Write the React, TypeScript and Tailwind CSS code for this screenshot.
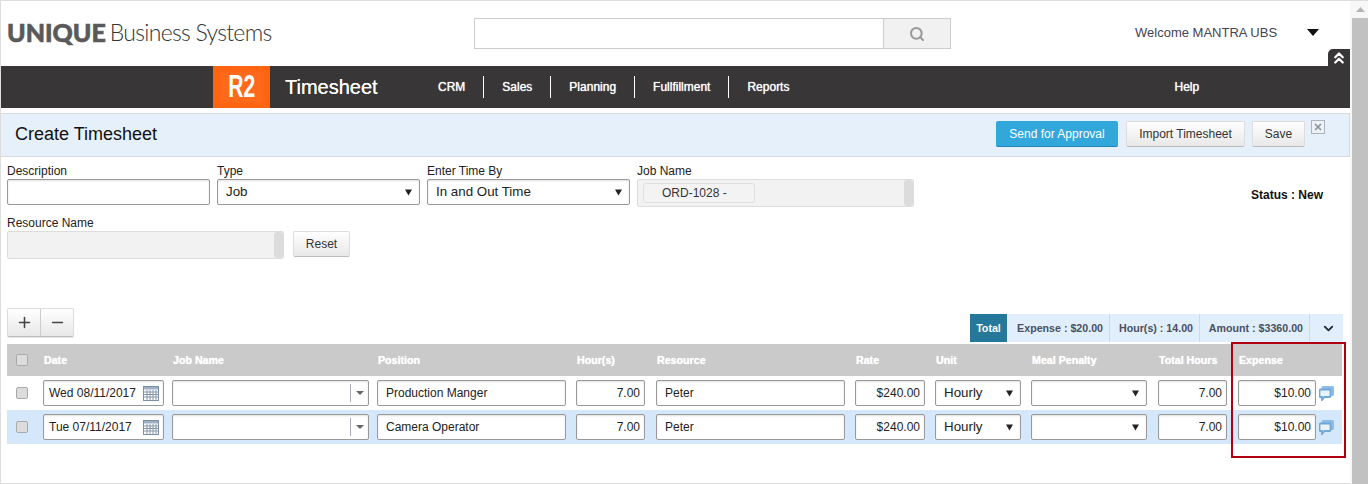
import React from "react";
import { Search, Plus, Minus, ChevronsUp, ChevronDown, X } from "lucide-react";

const font = "font-['Liberation_Sans',Arial,sans-serif]";

const Caret = () => (
  <svg width="7" height="7" viewBox="0 0 7 7" className="shrink-0">
    <path d="M0 0.5h7L3.500 6.500z" fill="#222" />
  </svg>
);

const CalendarIcon = () => (
  <svg width="16" height="15" viewBox="0 0 16 15" className="shrink-0">
    <rect x="0.5" y="0.5" width="15" height="14" fill="#fff" stroke="#7c8ea3" />
    <rect x="1" y="1" width="14" height="2.5" fill="#9fb0c2" />
    <path
      d="M4 4v10M7 4v10M10 4v10M13 4v10M1 6h14M1 8.5h14M1 11h14"
      stroke="#8596aa"
      strokeWidth="1"
    />
  </svg>
);

const CommentIcon = () => (
  <svg width="15" height="16" viewBox="0 0 15 16" className="shrink-0">
    <path
      d="M4 1h9.500A1.500 1.500 0 0 1 15 2.500v7a1.500 1.500 0 0 1-1.500 1.500H12V4H2.500V2.500A1.500 1.500 0 0 1 4 1z"
      fill="#8dbde6"
    />
    <path
      d="M1.500 4.500h9a1 1 0 0 1 1 1v5.500a1 1 0 0 1-1 1H5.500L3 15v-3H1.500a1 1 0 0 1-1-1V5.500a1 1 0 0 1 1-1z"
      fill="#e9f3fb"
      stroke="#6fa8dc"
      strokeWidth="1.800"
    />
  </svg>
);

const Checkbox = () => (
  <div className="w-3 h-3 rounded-[2px] border border-[#aaa] bg-[#dcdcdc] ml-[9px]" />
);

const Box = ({ className = "", children }: { className?: string; children?: React.ReactNode }) => (
  <div
    className={`h-[26px] bg-white border border-[#999] rounded-[2px] shadow-[inset_0_1px_2px_rgba(0,0,0,0.12)] flex items-center text-[12px] text-[#222] ${className}`}
  >
    {children}
  </div>
);

const SelectBox = ({ value, className = "" }: { value?: string; className?: string }) => (
  <Box className={`pl-[8px] pr-[7px] justify-between ${className}`}>
    <span className="text-[13.33px]">{value}</span>
    <Caret />
  </Box>
);

const GreyButton = ({ className = "", children }: { className?: string; children: React.ReactNode }) => (
  <div
    className={`h-[26px] flex items-center justify-center border border-[#ddd] border-b-[#bbb] rounded-[2px] bg-gradient-to-b from-white to-[#e8e8e8] text-[12px] text-[#333] ${className}`}
  >
    {children}
  </div>
);

const cols =
  "grid grid-cols-[36px_129px_205px_199px_80px_199px_80px_96px_127px_80px_104px] items-center";

const headers = ["Date", "Job Name", "Position", "Hour(s)", "Resource", "Rate", "Unit", "Meal Penalty", "Total Hours", "Expense"];

const rows = [
  { date: "Wed 08/11/2017", position: "Production Manger", bg: "bg-white" },
  { date: "Tue 07/11/2017", position: "Camera Operator", bg: "bg-[#d5e8fb]" },
];

const Row = ({ date, position, bg }: { date: string; position: string; bg: string }) => (
  <div className={`${cols} h-[34px] ${bg}`}>
    <Checkbox />
    <Box className="w-[121px] pl-[5px] pr-[4px] justify-between">
      <span>{date}</span>
      <CalendarIcon />
    </Box>
    <Box className="w-[197px] justify-end">
      <div className="w-[18px] h-[18px] border-l border-[#aab] flex items-center justify-center">
        <svg width="8" height="4" viewBox="0 0 8 4">
          <path d="M0 0h8L4 4z" fill="#666" />
        </svg>
      </div>
    </Box>
    <Box className="w-[189px] pl-[8px]">{position}</Box>
    <Box className="w-[69px] justify-end pr-[4px]">7.00</Box>
    <Box className="w-[189px] pl-[8px]">Peter</Box>
    <Box className="w-[70px] justify-end pr-[4px]">$240.00</Box>
    <SelectBox value="Hourly" className="w-[86px]" />
    <SelectBox className="w-[116px]" />
    <Box className="w-[69px] justify-end pr-[4px]">7.00</Box>
    <div className="flex items-center gap-[3px]">
      <Box className="w-[78px] justify-end pr-[4px]">$10.00</Box>
      <CommentIcon />
    </div>
  </div>
);

const Summary = ({ children, className = "" }: { children: React.ReactNode; className?: string }) => (
  <div className={`h-full flex items-center justify-end pr-[6px] border-r border-[#c4dcef] ${className}`}>{children}</div>
);

const navItems = ["CRM", "Sales", "Planning", "Fullfillment", "Reports"];

export default function App() {
  return (
    <div className={`${font} flex h-[484px] w-[1368px] overflow-hidden bg-white text-[12px] text-[#222]`}>
      <div className="flex flex-col w-[1350px] h-full border-l border-t border-b border-[#ddd]">
        {/* top bar */}
        <header className="relative h-[65px] shrink-0 flex items-start">
          <div className="w-[473px] pl-[6px] pt-[18px] flex items-center whitespace-nowrap">
            <span className="font-['Lato',sans-serif] font-black text-[25px] leading-[26px] text-[#5a5a5a] [-webkit-text-stroke:0.6px_#5a5a5a]">UNIQUE</span>
            <span className="font-['Lato',sans-serif] font-light text-[23px] leading-[26px] ml-[4px] text-[#333] tracking-[-0.72px]">
              Business Systems
            </span>
          </div>
          <div className="mt-[17px] flex h-[31px] border border-[#ccc]">
            <div className="w-[408px]" />
            <div className="w-[67px] bg-[#f1f1f1] border-l border-[#ccc] flex items-center justify-center">
              <Search size={16} strokeWidth={3} className="text-[#999]" />
            </div>
          </div>
          <div className="ml-[184px] mt-[24px] text-[#445] text-[13px] leading-4 whitespace-nowrap">Welcome MANTRA UBS</div>
          <svg width="12" height="7" viewBox="0 0 12 7" className="ml-[30px] mt-[28px]">
            <path d="M0 0h12L6 7z" fill="#111" />
          </svg>
          <div className="absolute right-0 bottom-0 w-[22px] h-[17px] bg-[#383637] rounded-tl-[5px] flex items-center justify-center">
            <ChevronsUp size={18} strokeWidth={3} className="text-white" />
          </div>
        </header>

        {/* nav */}
        <nav className="h-[42px] shrink-0 bg-[#383637] flex items-center text-white">
          <div className="ml-[212px] w-[57px] h-full bg-[#ff6510] flex items-center justify-center">
            <div className="w-[43px] h-[31px] bg-[#ff6a1a] flex items-center justify-center">
              <span className="font-bold text-[31px] scale-x-[0.68]">R2</span>
            </div>
          </div>
          <div className="ml-[15px] w-[153px] text-[20px] [text-shadow:0_0_0.5px_#fff]">Timesheet</div>
          {navItems.map((item, i) => (
            <React.Fragment key={item}>
              <span className="text-[12px] [text-shadow:0_0_1px_#fff]">{item}</span>
              {i < navItems.length - 1 && <div className="w-px h-[22px] bg-white mx-[18px]" />}
            </React.Fragment>
          ))}
          <span className="ml-[385px] text-[12px] [text-shadow:0_0_1px_#fff]">Help</span>
        </nav>

        {/* title */}
        <div className="mt-[5px] h-[44px] shrink-0 bg-[#e6f0fa] border-y border-r border-[#d5dae0] flex items-center pb-[2px]">
          <div className="ml-[14px] w-[981px] text-[18px] text-[#111]">Create Timesheet</div>
          <div className="w-[122px] h-[26px] flex items-center justify-center bg-[#31a7dc] border-b border-[#2284b4] rounded-[2px] text-white">
            Send for Approval
          </div>
          <GreyButton className="ml-[8px] w-[119px]">Import Timesheet</GreyButton>
          <GreyButton className="ml-[7px] w-[53px]">Save</GreyButton>
          <div className="ml-[6px] mb-[14px] w-[14px] h-[14px] border border-[#a9b4bf] bg-[#eef2f6] flex items-center justify-center">
            <X size={10} strokeWidth={4} className="text-[#8a94a0]" />
          </div>
        </div>

        {/* form */}
        <div className="pl-[6px] pr-[8px] pt-[7px] flex items-start">
          <div className="w-[210px]">
            <div className="h-[15px] leading-[15px]">Description</div>
            <Box className="w-[203px]" />
          </div>
          <div className="w-[210px]">
            <div className="h-[15px] leading-[15px]">Type</div>
            <SelectBox value="Job" className="w-[203px]" />
          </div>
          <div className="w-[210px]">
            <div className="h-[15px] leading-[15px]">Enter Time By</div>
            <SelectBox value="In and Out Time" className="w-[203px]" />
          </div>
          <div className="w-[277px]">
            <div className="h-[15px] leading-[15px]">Job Name</div>
            <div className="h-[28px] bg-[#f2f2f2] border border-[#ddd] rounded-[2px] flex items-center justify-between pl-[5px]">
              <div className="w-[112px] h-[20px] border border-[#e0e0e0] rounded-[3px] bg-[#f3f3f3] pl-[18px] flex items-center text-[#333]">
                ORD-1028 -
              </div>
              <div className="w-[9px] h-[26px] bg-[#dcdcdc] rounded-[3px]" />
            </div>
          </div>
          <div className="ml-[337px] mt-[22px] font-bold text-[12px] text-[#111] whitespace-nowrap">Status : New</div>
        </div>

        <div className="pl-[6px] pt-[8px] flex items-end">
          <div>
            <div className="h-[16px] leading-[16px]">Resource Name</div>
            <div className="w-[277px] h-[28px] bg-[#f2f2f2] border border-[#ddd] rounded-[2px] flex justify-end">
              <div className="w-[9px] h-[26px] bg-[#dcdcdc] rounded-[3px]" />
            </div>
          </div>
          <GreyButton className="ml-[9px] mb-[2px] w-[57px]">Reset</GreyButton>
        </div>

        {/* toolbar + totals */}
        <div className="pl-[6px] mt-[49px] flex items-start">
          <div className="flex w-[67px] h-[29px] border border-[#ddd] border-b-[#bbb] rounded-[2px] bg-gradient-to-b from-white to-[#e8e8e8] shadow-[0_1px_1px_rgba(0,0,0,0.1)]">
            <div className="w-[33px] flex items-center justify-center border-r border-[#ccc]">
              <Plus size={17} strokeWidth={2.2} className="text-[#444]" />
            </div>
            <div className="flex-1 flex items-center justify-center">
              <Minus size={17} strokeWidth={2.2} className="text-[#444]" />
            </div>
          </div>
          <div className="ml-[896px] mt-[6px] h-[28px] flex items-center bg-[#e1effc] text-[#4a5060] font-bold text-[10.67px]">
            <div className="w-[37px] h-full bg-[#26789a] text-white flex items-center justify-center">Total</div>
            <Summary className="w-[103px]">Expense : $20.00</Summary>
            <Summary className="w-[90px]">Hour(s) : 14.00</Summary>
            <Summary className="w-[110px]">Amount : $3360.00</Summary>
            <div className="w-[33px] pl-[3px] flex items-center justify-center">
              <ChevronDown size={15} strokeWidth={3} className="text-[#1d2b44]" />
            </div>
          </div>
        </div>

        {/* table */}
        <div className="relative ml-[6px] mt-[2px] w-[1335px]">
          <div className={`${cols} h-[32px] bg-[#cacaca] text-white font-bold text-[10.67px] [text-shadow:0_0_1px_#fff]`}>
            <Checkbox />
            {headers.map((h) => (
              <span key={h} className="pl-px">
                {h}
              </span>
            ))}
          </div>
          {rows.map((r) => (
            <Row key={r.date} {...r} />
          ))}
          <div className="absolute left-[1224px] top-[-2px] w-[115px] h-[116px] border-2 border-[#b00012]" />
        </div>
      </div>

      {/* scrollbar */}
      <div className="w-[18px] h-full flex flex-col border-t border-[#ddd] bg-[#f7f7f7] pl-[2px]">
        <div className="h-[17px] flex items-center justify-center">
          <svg width="9" height="5" viewBox="0 0 9 5">
            <path d="M4.500 0L9 5H0z" fill="#b5b5b5" />
          </svg>
        </div>
        <div className="flex-1 bg-[#c1c1c1]" />
      </div>
    </div>
  );
}
